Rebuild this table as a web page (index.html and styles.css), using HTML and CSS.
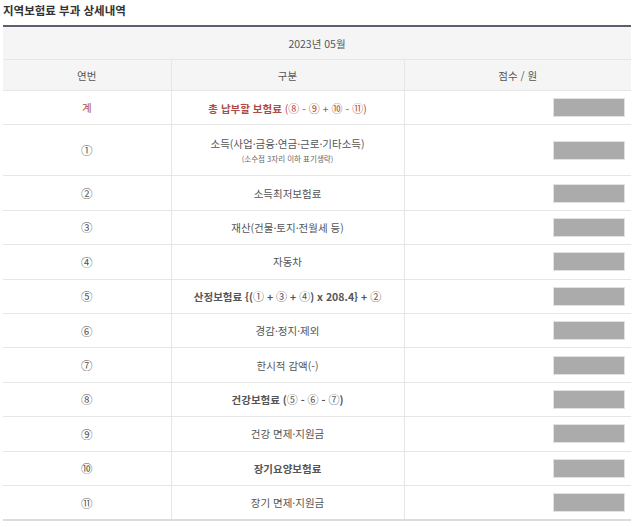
FILE: index.html
```html
<!DOCTYPE html>
<html lang="ko">
<head>
<meta charset="utf-8">
<link rel="stylesheet" href="styles.css">
</head>
<body>
<div class="wrap">
  <h2 class="title">지역보험료 부과 상세내역</h2>
  <table class="detail">
    <colgroup><col class="c1"><col class="c2"><col class="c3"></colgroup>
    <thead>
      <tr class="month"><th colspan="3">2023년 05월</th></tr>
      <tr class="head"><th>연번</th><th>구분</th><th>점수 / 원</th></tr>
    </thead>
    <tbody>
      <tr class="total"><td>계</td><td>총 납부할 보험료 <span class="f">(<span class="cn">⑧</span> - <span class="cn">⑨</span> + <span class="cn">⑩</span> - <span class="cn">⑪</span>)</span></td><td class="v"><span class="mask"></span></td></tr>
      <tr class="tall"><td class="n">①</td><td>소득(사업·금융·연금·근로·기타소득)<div class="sub">(소수점 3자리 이하 표기생략)</div></td><td class="v"><span class="mask"></span></td></tr>
      <tr><td class="n">②</td><td>소득최저보험료</td><td class="v"><span class="mask"></span></td></tr>
      <tr><td class="n">③</td><td>재산(건물·토지·전월세 등)</td><td class="v"><span class="mask"></span></td></tr>
      <tr><td class="n">④</td><td>자동차</td><td class="v"><span class="mask"></span></td></tr>
      <tr><td class="n">⑤</td><td class="b">산정보험료 {(<span class="cn">①</span> + <span class="cn">③</span> + <span class="cn">④</span>) x 208.4} + <span class="cn">②</span></td><td class="v"><span class="mask"></span></td></tr>
      <tr><td class="n">⑥</td><td>경감·정지·제외</td><td class="v"><span class="mask"></span></td></tr>
      <tr><td class="n">⑦</td><td>한시적 감액(-)</td><td class="v"><span class="mask"></span></td></tr>
      <tr><td class="n">⑧</td><td class="b">건강보험료 (<span class="cn">⑤</span> - <span class="cn">⑥</span> - <span class="cn">⑦</span>)</td><td class="v"><span class="mask"></span></td></tr>
      <tr><td class="n">⑨</td><td>건강 면제·지원금</td><td class="v"><span class="mask"></span></td></tr>
      <tr><td class="n">⑩</td><td class="b">장기요양보험료</td><td class="v"><span class="mask"></span></td></tr>
      <tr><td class="n">⑪</td><td>장기 면제·지원금</td><td class="v"><span class="mask"></span></td></tr>
    </tbody>
  </table>
</div>
</body>
</html>
```
FILE: styles.css
```css
html, body { margin: 0; padding: 0; background: #fff; }
body { font-family: "Noto Sans CJK KR", "Noto Sans", sans-serif; color: #555; }
.wrap { padding: 3px 5px 0 3px; }
.title { margin: 0 0 7px 0; font-size: 11.5px; font-weight: 700; color: #333; line-height: 15px; }
.detail { width: 628px; border-collapse: collapse; table-layout: fixed; border-top: 2px solid #5e5e6e; border-bottom: 2px solid #dcdcdf; font-size: 10.5px; }
.c1 { width: 168px; }
.c2 { width: 233px; }
.c3 { width: 227px; }
.detail th { font-weight: 400; color: #555; background: #f5f5f5; }
.month th { height: 32px; padding: 0; border-bottom: 1px solid #e6e6e6; }
.head th { height: 30px; padding: 0; border-bottom: 1px solid #e6e6e6; border-left: 1px solid #e6e6e6; }
.head th:first-child { border-left: none; }
.detail td { height: 33.4px; padding: 0; text-align: center; border-bottom: 1px solid #e6e6e6; border-left: 1px solid #e6e6e6; color: #555; }
.detail td:first-child { border-left: none; }
.detail tbody tr:last-child td { border-bottom: none; }
.tall td { height: 50px; }
.n { color: #a2a2a2; font-size: 11.5px; }
.cn { font-size: 11px; font-weight: 400; }
.sub { font-size: 7.5px; color: #666; margin-top: 3px; line-height: 10px; }
.b { font-weight: 700; color: #444; }
.total td { color: #b04a45; }
.total .f { font-weight: 400; }
.total td:nth-child(2) { font-weight: 700; }
.v { text-align: right !important; padding-right: 6px !important; }
.mask { display: inline-block; width: 70px; height: 17px; background: #ababab; border: 1px solid #e2e2e2; vertical-align: middle; }
```
